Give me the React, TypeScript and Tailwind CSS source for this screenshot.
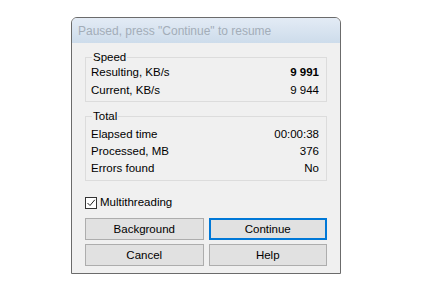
import React from "react";

function Row({ label, value, bold, h }: { label: string; value: string; bold?: boolean; h: string }) {
  return (
    <div className={`flex items-center justify-between ${h}`}>
      <span>{label}</span>
      <span className={bold ? "font-bold" : ""}>{value}</span>
    </div>
  );
}

function Btn({ children, active }: { children: React.ReactNode; active?: boolean }) {
  return (
    <div
      className={
        "flex h-[22px] items-center justify-center bg-[#e1e1e1] " +
        (active ? "border-2 border-[#0078d7]" : "border border-[#adadad]")
      }
    >
      {children}
    </div>
  );
}

export default function App() {
  return (
    <div
      className="h-[308px] w-[441px] bg-white pl-[71px] pt-[17px] text-[11.5px] text-[#000]"
      style={{ fontFamily: '"Liberation Sans", Arial, sans-serif' }}
    >
      <div className="flex h-[257px] w-[270px] flex-col overflow-hidden rounded-t-[6px] border border-[#6b6b6b] bg-[#f0f0f0]">
        <div className="flex h-[25px] items-center bg-gradient-to-b from-[#e3ebf5] to-[#cddceb] pl-[6px] text-[12px] text-[#a3adb8]">
          Paused, press "Continue" to resume
        </div>
        <div className="flex flex-1 flex-col px-[13px]">
          <div className="relative mt-[14px] border border-[#dcdcdc] pb-[1px] pl-[5px] pr-[7px] pt-[6px]">
            <span className="absolute -top-[8px] left-[6px] bg-[#f0f0f0] px-[1px] leading-[14px]">Speed</span>
            <Row h="h-[18px]" label="Resulting, KB/s" value="9 991" bold />
            <Row h="h-[18px]" label="Current, KB/s" value="9 944" />
          </div>
          <div className="relative mt-[14px] border border-[#dcdcdc] pb-[3px] pl-[5px] pr-[7px] pt-[9px]">
            <span className="absolute -top-[8px] left-[6px] bg-[#f0f0f0] px-[1px] leading-[14px]">Total</span>
            <Row h="h-[17px]" label="Elapsed time" value="00:00:38" />
            <Row h="h-[17px]" label="Processed, MB" value="376" />
            <Row h="h-[17px]" label="Errors found" value="No" />
          </div>
          <div className="mt-[13px] flex items-center gap-[3px]">
            <div className="flex h-[12px] w-[12px] items-center justify-center border border-[#333] bg-white">
              <svg width="10" height="10" viewBox="0 0 10 10">
                <path d="M1.5 5 L4 7.5 L8.8 1.8" fill="none" stroke="#222" strokeWidth="1" />
              </svg>
            </div>
            <span>Multithreading</span>
          </div>
          <div className="mt-[7px] grid grid-cols-2 gap-x-[5px] gap-y-[4px]">
            <Btn>Background</Btn>
            <Btn active>Continue</Btn>
            <Btn>Cancel</Btn>
            <Btn>Help</Btn>
          </div>
        </div>
      </div>
    </div>
  );
}
